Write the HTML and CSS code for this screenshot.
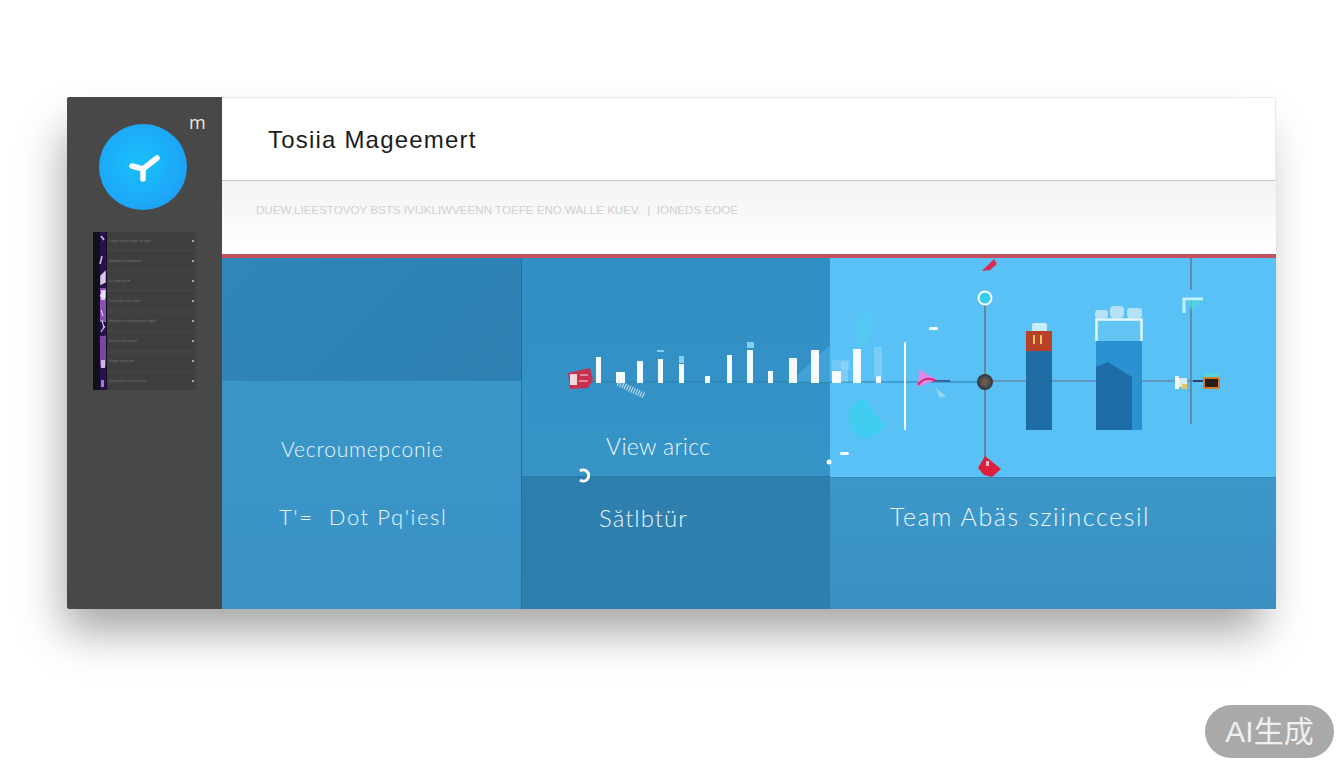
FILE: index.html
```html
<!DOCTYPE html>
<html lang="en">
<head>
    <meta charset="UTF-8">
    <meta name="viewport" content="width=device-width, initial-scale=1.0">
    <title>Tosiia Magagemert</title>
    <link rel="stylesheet" href="styles.css">
</head>
<body>

    <div class="card">

        <div class="sidebar">
            <span class="side-mark">m</span>
            <div class="logo">
                <svg width="34" height="30" viewBox="0 0 34 30">
                    <path d="M6 14 L17 17 L31 6 M17 17 L17 27" fill="none" stroke="#fff" stroke-width="5.5" stroke-linecap="round" stroke-linejoin="round"/>
                </svg>
            </div>
            <div class="thumb">
                <svg class="thumb-strip" width="14" height="158" viewBox="0 0 14 158">
                    <rect width="14" height="158" fill="#100f1c"/>
                    <rect x="7" width="6" height="158" fill="#2a1050"/>
                    <path d="M8 4 L11 8 M9 24 L7 32 M8 44 L12 40 L12 50 L8 52 Z" stroke="#d9c8ea" stroke-width="1.5" fill="#d9c8ea"/>
                    <rect x="7" y="56" width="6" height="34" fill="#8a4fb5"/>
                    <rect x="8" y="58" width="4" height="10" fill="#ddc7ee"/>
                    <path d="M7 64 L12 58 L12 66 Z M8 78 L10 84 M9 88 L11 96" stroke="#efe3f7" fill="#efe3f7"/>
                    <path d="M8 100 L12 94 M7 110 L12 104" stroke="#d9c8ea" stroke-width="1.2"/>
                    <rect x="7" y="104" width="6" height="30" fill="#7e45a8"/>
                    <rect x="8" y="128" width="4" height="8" fill="#cdb5e2"/>
                    <rect x="8" y="148" width="3" height="7" fill="#a97bd0"/>
                </svg>
                <ul class="thumb-list">
                    <li><span>Lorem ipsum dolor sit amet</span><i></i></li>
                    <li><span>Sed do eiusmod tem</span><i></i></li>
                    <li><span>Ut enim ad mi</span><i></i></li>
                    <li><span>Duis aute irure dolor</span><i></i></li>
                    <li><span>Excepteur sint occaecat cupid</span><i></i></li>
                    <li><span>Nemo enim ipsam</span><i></i></li>
                    <li><span>Neque porro qui</span><i></i></li>
                    <li><span>Quis autem vel eum iure</span><i></i></li>
                </ul>
            </div>
        </div>

        <div class="main">
            <div class="header">
                <h1>Tosiia Mageemert</h1>
            </div>
            <div class="subhead">
                <p>DUEW.LIEESTOVOY BSTS IVIJKLIWVEENN TOEFE ENO.WALLE KUEV. &nbsp;|&nbsp; IONEDS EOOE</p>
            </div>

            <div class="board">
                <div class="col col-1">
                    <div class="cell cell-a"></div>
                    <div class="cell cell-b">
                        <p class="label label-a">Vecroumepconie</p>
                        <p class="label label-b">T'= &nbsp;Dot Pq'iesl</p>
                    </div>
                </div>
                <div class="col col-2">
                    <div class="cell cell-c">
                        <p class="label label-c">View aricc</p>
                    </div>
                    <div class="cell cell-d">
                        <p class="label label-d">Sătlbtür</p>
                    </div>
                </div>
                <div class="col col-3">
                    <div class="cell cell-e"></div>
                    <div class="cell cell-f">
                        <p class="label label-e">Team Abäs sziinccesil</p>
                    </div>
                </div>

                <!-- chart sits over the cells, viewBox uses page coordinates -->
                <svg class="chart" viewBox="222 258 1054 351">
                    <!-- axes -->
                    <line x1="985" y1="305" x2="985" y2="472" stroke="#6b7280" stroke-width="1.5"/>
                    <line x1="985" y1="381" x2="1205" y2="381" stroke="#6f6f8e" stroke-width="1.2"/>
                    <line x1="1191" y1="258" x2="1191" y2="290" stroke="#64798c" stroke-width="1.5"/>
                    <line x1="1191" y1="300" x2="1191" y2="424" stroke="#64798c" stroke-width="1.5"/>
                    <line x1="925" y1="381" x2="950" y2="381" stroke="#2c3f73" stroke-width="1.5"/>
                    <line x1="590" y1="382" x2="985" y2="382" stroke="#2b7fb0" stroke-width="1"/>
                    <path d="M790 382 L830 345 V382 Z" fill="#4aaee6" fill-opacity=".6"/>

                    <!-- white bars -->
                    <g fill="#fff" fill-opacity=".95">
                        <rect x="596" y="357" width="5" height="26"/>
                        <rect x="616" y="372" width="9" height="11"/>
                        <rect x="637" y="361" width="6" height="22"/>
                        <rect x="658" y="359" width="5" height="24"/>
                        <rect x="679" y="364" width="5" height="19"/>
                        <rect x="705" y="376" width="5" height="7"/>
                        <rect x="727" y="355" width="5" height="28"/>
                        <rect x="747" y="350" width="6" height="33"/>
                        <rect x="768" y="371" width="5" height="12"/>
                        <rect x="789" y="358" width="8" height="25"/>
                        <rect x="811" y="350" width="8" height="33"/>
                        <rect x="832" y="371" width="9" height="12"/>
                        <rect x="853" y="349" width="8" height="34"/>
                        <rect x="876" y="376" width="5" height="7"/>
                        <rect x="904" y="342" width="2" height="88"/>
                        <rect x="929" y="327" width="9" height="3" rx="1.5"/>
                        <rect x="840" y="452" width="9" height="3" rx="1.5"/>
                        <circle cx="829" cy="462" r="2.5"/>
                    </g>
                    <g fill="#9fdcf7" fill-opacity=".8">
                        <rect x="657" y="350" width="7" height="2"/>
                        <rect x="679" y="356" width="5" height="7"/>
                        <rect x="747" y="342" width="7" height="6"/>
                        <rect x="874" y="347" width="8" height="30" fill-opacity=".45"/>
                        <rect x="841" y="362" width="7" height="20" fill-opacity=".5"/>
                        <rect x="832" y="360" width="18" height="10" fill-opacity=".35"/>
                    </g>

                    <!-- blobs -->
                    <path d="M855 315 L870 312 L875 322 L868 345 L858 345 Z" fill="#4fd0ee" fill-opacity=".5"/>
                    <path d="M850 408 Q860 395 868 402 Q873 415 886 425 Q875 442 860 438 Q846 425 850 408 Z" fill="#3ad0ee" fill-opacity=".75"/>

                    <!-- red chip on the left -->
                    <path d="M568 373 L590 368 L593 380 L588 388 L570 389 Z" fill="#c9304f"/>
                    <rect x="570" y="374" width="7" height="11" fill="#f5d5dc"/>
                    <path d="M580 375 h8 M579 381 h9" stroke="#e9a3b3" stroke-width="1.5"/>
                    <path d="M618 383 L645 396" stroke="#cfe6f2" stroke-width="6" stroke-dasharray="1 1.5"/>

                    <!-- small ring on the divider -->
                    <path d="M580 471 A5.5 5.5 0 1 1 580 480" fill="none" stroke="#fff" stroke-width="3"/>

                    <!-- pink marker -->
                    <path d="M919 369 L937 380 L918 387 Z" fill="#d98be6"/>
                    <path d="M918 385 Q925 375 936 381" fill="none" stroke="#e0226e" stroke-width="2"/>
                    <path d="M935 387 L946 396 L940 398 Z" fill="#8fd4f0"/>

                    <!-- red markers -->
                    <path d="M982 271 L994 259 L997 264 L990 270 Z" fill="#d92b52"/>
                    <path d="M978 468 L985 456 L1001 469 L992 477 L984 475 Z" fill="#dc1f3d"/>
                    <rect x="986" y="461" width="3" height="5" fill="#eeb6c0"/>

                    <!-- ring top and hub -->
                    <circle cx="985" cy="298" r="6.5" fill="#33cdf0" stroke="#fff" stroke-width="2"/>
                    <circle cx="985" cy="382" r="7" fill="#4a4f57" stroke="#3b3b3b" stroke-width="2"/>
                    <circle cx="985" cy="382" r="3.5" fill="#6b5b48"/>

                    <!-- tall bar -->
                    <rect x="1032" y="323" width="15" height="9" rx="2" fill="#c7ecf7"/>
                    <rect x="1026" y="331" width="26" height="20" fill="#b9412a"/>
                    <rect x="1033" y="335" width="2" height="9" fill="#f6c26b"/>
                    <rect x="1040" y="335" width="2" height="9" fill="#f6c26b"/>
                    <rect x="1026" y="351" width="26" height="79" fill="#1f6da4"/>

                    <!-- wide bar -->
                    <g fill="#b5e2f4">
                        <rect x="1095" y="310" width="13" height="8" rx="3"/>
                        <rect x="1110" y="306" width="14" height="12" rx="4"/>
                        <rect x="1127" y="308" width="15" height="10" rx="3"/>
                    </g>
                    <path d="M1096.5 341 V319.5 H1141.5 V341" fill="#62c4f3" stroke="#e6f7fd" stroke-width="2.5"/>
                    <rect x="1096" y="341" width="46" height="89" fill="#2a92d1"/>
                    <path d="M1096 367 L1108 362 L1132 377 V430 H1096 Z" fill="#1f6da8"/>

                    <!-- right end -->
                    <path d="M1184 313 V299 H1203" fill="none" stroke="#c4f1f3" stroke-width="3"/>
                    <path d="M1186 300 H1204 L1192 310 Z" fill="#52d6de" fill-opacity=".7"/>
                    <rect x="1175" y="376" width="4" height="13" fill="#f4f8f5"/>
                    <rect x="1179" y="378" width="8" height="9" fill="#d6eef2"/>
                    <rect x="1182" y="384" width="5" height="5" fill="#e4c565"/>
                    <line x1="1193" y1="381" x2="1205" y2="381" stroke="#23466f" stroke-width="2"/>
                    <rect x="1204" y="373" width="16" height="5" fill="#55d6dd"/>
                    <rect x="1204" y="378" width="15" height="10" rx="1" fill="#2a1c12" stroke="#d57a25" stroke-width="2"/>
                </svg>
            </div>
        </div>
    </div>

    <div class="ai-badge">AI生成</div>

</body>
</html>
```

FILE: styles.css
```css
html, body {
    margin: 0;
    padding: 0;
    height: 768px;
    overflow: hidden;
}

body {
    background: #fff;
    font-family: "Liberation Sans", Arial, sans-serif;
    padding: 97px 68px 0 67px;
    box-sizing: border-box;
    position: relative;
}

.card {
    display: flex;
    height: 512px;
    border-radius: 2px;
    box-shadow: -8px 28px 42px -6px rgba(0, 0, 0, 0.36);
}

/* sidebar */
.sidebar {
    position: relative;
    width: 155px;
    flex: none;
    background: #484848;
    border-radius: 2px 0 0 2px;
    display: flex;
    flex-direction: column;
    align-items: flex-start;
    padding: 27px 0 0 26px;
    box-sizing: border-box;
}

.side-mark {
    position: absolute;
    top: 15px;
    left: 122px;
    color: #eee8d8;
    font-size: 18px;
    line-height: 20px;
    font-family: "Open Sans", sans-serif;
}

.logo {
    width: 88px;
    height: 86px;
    margin-left: 6px;
    border-radius: 50%;
    background: radial-gradient(circle at 45% 46%, #19c0fb 0%, #1da8f8 62%, #2288ee 100%);
    display: flex;
    align-items: center;
    justify-content: center;
}

.thumb {
    display: flex;
    width: 104px;
    height: 158px;
    margin-top: 22px;
    background: #434343;
}

.thumb-strip {
    flex: none;
    display: block;
}

.thumb-list {
    list-style: none;
    margin: 0;
    padding: 0 3px 0 0;
    flex: 1;
    min-width: 0;
    display: flex;
    flex-direction: column;
    justify-content: space-between;
}

.thumb-list li {
    display: flex;
    justify-content: space-between;
    align-items: center;
    height: 17px;
    padding-left: 2px;
    background: #3e3e3e;
    color: #777;
    font-size: 3.5px;
    white-space: nowrap;
    overflow: hidden;
}

.thumb-list i {
    width: 2px;
    height: 2px;
    background: #a5a5a5;
    flex: none;
}

/* main area */
.main {
    flex: 1;
    min-width: 0;
    display: flex;
    flex-direction: column;
}

.header {
    height: 84px;
    box-sizing: border-box;
    background: #fff;
    border-top: 1px solid #e9e9e9;
    border-right: 1px solid #e9e9e9;
    border-bottom: 1px solid #c4c4c4;
    padding: 2px 0 0 46px;
    display: flex;
    align-items: center;
}

.header h1 {
    margin: 0;
    font-size: 24px;
    font-weight: 400;
    letter-spacing: 1.2px;
    color: #1c1c1c;
}

.subhead {
    height: 73px;
    box-sizing: border-box;
    background: linear-gradient(to bottom, #f3f3f3, #fff);
    padding: 22px 0 0 34px;
}

.subhead p {
    margin: 0;
    font-size: 11.6px;
    line-height: 14px;
    color: #d0d0d0;
    white-space: nowrap;
}

.board {
    position: relative;
    flex: 1;
    display: grid;
    grid-template-columns: 299px 309px 1fr;
    border-top: 4px solid #c4505f;
    box-sizing: border-box;
}

.col {
    display: flex;
    flex-direction: column;
}

.col-2 {
    border-left: 1px solid #2c6d96;
}

.cell {
    box-sizing: border-box;
}

.cell-a {
    height: 123px;
    background: linear-gradient(135deg, #2f86b9, #2d80b2);
}

.cell-b {
    flex: 1;
    background: linear-gradient(to bottom, #3a96c8, #3b92c5);
    padding: 56px 0 0 59px;
}

.cell-c {
    height: 219px;
    background: linear-gradient(to bottom, #2f8ec3, #3794c7);
    padding: 174px 0 0 84px;
    border-bottom: 1px solid #2d78a6;
}

.cell-d {
    flex: 1;
    background: #2e7eae;
    padding: 28px 0 0 77px;
}

.cell-e {
    height: 219px;
    background: #59c1f6;
}

.cell-f {
    flex: 1;
    background: linear-gradient(to bottom, #3c98ca, #3a8fc1);
    border-top: 1px solid #3587b8;
    padding: 24px 0 0 60px;
}

.label {
    margin: 0;
    color: #eaf6fb;
    font-family: Lato, sans-serif;
    font-weight: 300;
    white-space: nowrap;
}

.label-a {
    font-size: 21px;
    line-height: 24px;
    letter-spacing: 0.8px;
}

.label-b {
    margin-top: 43px;
    margin-left: -2px;
    font-size: 22px;
    line-height: 26px;
    letter-spacing: 1.6px;
}

.label-c {
    font-size: 23px;
    line-height: 28px;
    letter-spacing: 0.3px;
}

.label-d {
    font-size: 24px;
    line-height: 26px;
    letter-spacing: 1px;
}

.label-e {
    font-size: 25px;
    line-height: 28px;
    letter-spacing: 1.6px;
}

.chart {
    position: absolute;
    left: 0;
    top: 0;
    width: 100%;
    height: 100%;
    pointer-events: none;
}

/* corner badge */
.ai-badge {
    position: absolute;
    left: 1205px;
    top: 705px;
    width: 129px;
    height: 53px;
    border-radius: 27px;
    background: #a9a9a9;
    color: #f0f0f0;
    font-family: "Liberation Sans", "Noto Sans CJK SC", sans-serif;
    font-size: 30px;
    line-height: 53px;
    text-align: center;
}
```
